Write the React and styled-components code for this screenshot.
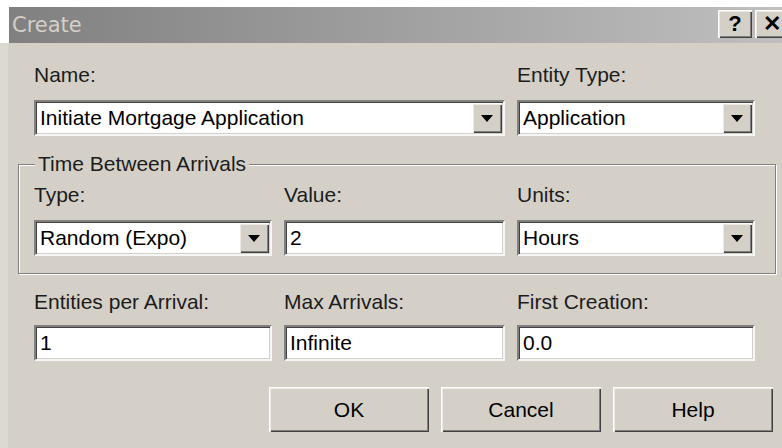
import React from 'react';
import styled, { createGlobalStyle } from 'styled-components';

const GlobalStyle = createGlobalStyle`
    html, body {
        margin: 0;
        padding: 0;
        background: #ffffff;
    }
    body {
        font-family: "Liberation Sans", Arial, sans-serif;
    }
`;

const Viewport = styled.div`
    width: 782px;
    height: 448px;
    overflow: hidden;
    background: #ffffff;
`;

const Dialog = styled.div`
    width: 796px;
    height: 448px;
    padding-top: 7px;
    box-sizing: border-box;
    display: flex;
    flex-direction: column;
`;

const TitleBar = styled.div`
    height: 36px;
    margin: 0 3px 0 9px;
    padding: 3px 4px 0 3px;
    box-sizing: border-box;
    display: flex;
    align-items: flex-start;
    background: linear-gradient(to right, #808080, #c0c0c0);
`;

const Caption = styled.span`
    font-family: "DejaVu Sans", Verdana, sans-serif;
    font-size: 21px;
    line-height: 30px;
    color: #d4d0c8;
`;

const CaptionButtons = styled.div`
    margin-left: auto;
    display: flex;
    gap: 3px;
`;

const raised = `
    background: #d4d0c8;
    box-shadow: inset 1px 1px 0 #ffffff, inset 2px 2px 0 #ece9e3,
        inset -1px -1px 0 #404040, inset -2px -2px 0 #808080;
`;

const CaptionButton = styled.span`
    ${raised}
    width: 34px;
    height: 28px;
    display: flex;
    align-items: center;
    justify-content: center;
    font-family: "Liberation Sans", Arial, sans-serif;
    font-weight: bold;
    font-size: 22px;
    color: #000;
`;

const Body = styled.div`
    flex: 1;
    background: #d4d0c8;
    border-left: 8px solid #dcd9d3;
    padding: 20px 10px 0 10px;
`;

const Grid = styled.div`
    display: grid;
    grid-template-columns: 238px 221px 238px;
    column-gap: 12px;
    row-gap: ${p => p.$rowGap}px;
    margin-left: ${p => p.$indent}px;
`;

const Label = styled.div`
    font-size: 21px;
    line-height: 24px;
    color: #1c1c1c;
    white-space: nowrap;
    grid-column: ${p => p.$span || 'auto'};
`;

const Field = styled.div`
    grid-column: ${p => p.$span || 'auto'};
    height: 36px;
    box-sizing: border-box;
    display: flex;
    align-items: stretch;
    padding: 1px;
    background: #ffffff;
    border-style: solid;
    border-width: 2px;
    border-color: #808080 #f6f6f6 #f6f6f6 #808080;
    box-shadow: inset 1px 1px 0 #404040, inset -1px -1px 0 #d4d0c8;
`;

const FieldText = styled.span`
    flex: 1;
    display: flex;
    align-items: center;
    padding-left: 3px;
    font-size: 21px;
    color: #000;
    white-space: nowrap;
    overflow: hidden;
`;

const DropButton = styled.span`
    ${raised}
    width: 30px;
    display: flex;
    align-items: center;
    justify-content: center;
    &::after {
        content: '';
        border-left: 6px solid transparent;
        border-right: 6px solid transparent;
        border-top: 7px solid #000;
        margin-top: 1px;
    }
`;

const Group = styled.fieldset`
    margin: 16px 0 16px 0;
    padding: 7px 15px 17px 15px;
    width: 758px;
    box-sizing: border-box;
    border: 1px solid #808080;
    box-shadow: inset 1px 1px 0 #ffffff, 1px 1px 0 #ffffff;
    legend {
        font-size: 21px;
        line-height: 24px;
        color: #1c1c1c;
        padding: 0 3px;
        margin-left: 1px;
        background: #d4d0c8;
    }
`;

const ButtonRow = styled.div`
    display: flex;
    justify-content: flex-end;
    gap: 12px;
    margin-top: 26px;
    padding-right: 13px;
`;

const PushButton = styled.button`
    ${raised}
    width: 160px;
    height: 45px;
    border: none;
    padding: 0;
    font-family: "Liberation Sans", Arial, sans-serif;
    font-size: 21px;
    color: #000;
`;

const Combo = ({ value, span }) => (
    <Field $span={span}>
        <FieldText>{value}</FieldText>
        <DropButton />
    </Field>
);

const TextBox = ({ value }) => (
    <Field>
        <FieldText>{value}</FieldText>
    </Field>
);

const App = () => {
    return (
        <Viewport>
            <GlobalStyle />
            <Dialog>
                <TitleBar>
                    <Caption>Create</Caption>
                    <CaptionButtons>
                        <CaptionButton>?</CaptionButton>
                        <CaptionButton>✕</CaptionButton>
                    </CaptionButtons>
                </TitleBar>
                <Body>
                    <Grid $rowGap={13} $indent={16}>
                        <Label $span="1 / 3">Name:</Label>
                        <Label>Entity Type:</Label>
                        <Combo span="1 / 3" value="Initiate Mortgage Application" />
                        <Combo value="Application" />
                    </Grid>
                    <Group>
                        <legend>Time Between Arrivals</legend>
                        <Grid $rowGap={13} $indent={0}>
                            <Label>Type:</Label>
                            <Label>Value:</Label>
                            <Label>Units:</Label>
                            <Combo value="Random (Expo)" />
                            <TextBox value="2" />
                            <Combo value="Hours" />
                        </Grid>
                    </Group>
                    <Grid $rowGap={11} $indent={16}>
                        <Label>Entities per Arrival:</Label>
                        <Label>Max Arrivals:</Label>
                        <Label>First Creation:</Label>
                        <TextBox value="1" />
                        <TextBox value="Infinite" />
                        <TextBox value="0.0" />
                    </Grid>
                    <ButtonRow>
                        <PushButton>OK</PushButton>
                        <PushButton>Cancel</PushButton>
                        <PushButton>Help</PushButton>
                    </ButtonRow>
                </Body>
            </Dialog>
        </Viewport>
    );
};

export default App;
